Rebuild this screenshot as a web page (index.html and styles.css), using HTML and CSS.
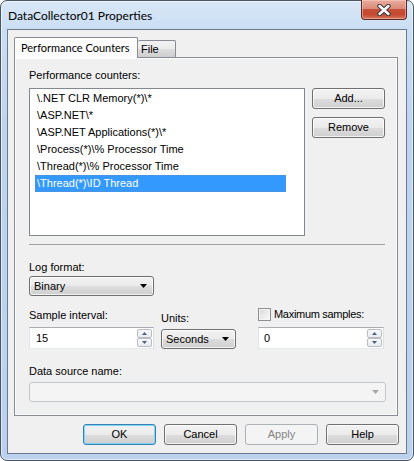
FILE: index.html
```html
<!DOCTYPE html>
<html>
<head>
<meta charset="utf-8">
<title>DataCollector01 Properties</title>
<link rel="stylesheet" href="styles.css">
</head>
<body>
<div class="window">
  <div class="titlebar">
    <span class="title">DataCollector01 Properties</span>
    <div class="close">
      <svg width="14" height="12" viewBox="0 0 14 12">
        <path d="M2.5 2 L11.5 10 M11.5 2 L2.5 10" stroke="#3a3a3a" stroke-width="4.4" stroke-linecap="round" fill="none"/>
        <path d="M2.5 2 L11.5 10 M11.5 2 L2.5 10" stroke="#ffffff" stroke-width="2.4" stroke-linecap="round" fill="none"/>
      </svg>
    </div>
  </div>
  <div class="client">
    <div class="tabs">
      <div class="tab active">Performance Counters</div>
      <div class="tab">File</div>
    </div>
    <div class="panel">
      <div class="label">Performance counters:</div>
      <div class="counters-row">
        <div class="listbox">
          <div class="item">\.NET CLR Memory(*)\*</div>
          <div class="item">\ASP.NET\*</div>
          <div class="item">\ASP.NET Applications(*)\*</div>
          <div class="item">\Process(*)\% Processor Time</div>
          <div class="item">\Thread(*)\% Processor Time</div>
          <div class="item selected">\Thread(*)\ID Thread</div>
        </div>
        <div class="side-buttons">
          <div class="btn">Add...</div>
          <div class="btn">Remove</div>
        </div>
      </div>
      <div class="separator"></div>
      <div class="label label-log">Log format:</div>
      <div class="combo combo-log">
        <span>Binary</span>
        <svg class="arrow" width="7" height="4" viewBox="0 0 7 4"><polygon points="0,0 7,0 3.5,4" fill="#000"/></svg>
      </div>
      <div class="sample-row">
        <div class="field field-interval">
          <div class="label">Sample interval:</div>
          <div class="spin">
            <span class="spin-value">15</span>
            <div class="spin-buttons">
              <div class="spin-btn"><svg width="5" height="3" viewBox="0 0 5 3"><polygon points="0,3 5,3 2.5,0" fill="#4c5e80"/></svg></div>
              <div class="spin-btn"><svg width="5" height="3" viewBox="0 0 5 3"><polygon points="0,0 5,0 2.5,3" fill="#4c5e80"/></svg></div>
            </div>
          </div>
        </div>
        <div class="field field-units">
          <div class="label label-units">Units:</div>
          <div class="combo combo-units">
            <span>Seconds</span>
            <svg class="arrow" width="7" height="4" viewBox="0 0 7 4"><polygon points="0,0 7,0 3.5,4" fill="#000"/></svg>
          </div>
        </div>
        <div class="field field-max">
          <div class="check-line">
            <span class="checkbox"></span>
            <span class="check-label">Maximum samples:</span>
          </div>
          <div class="spin">
            <span class="spin-value spin-value-max">0</span>
            <div class="spin-buttons">
              <div class="spin-btn"><svg width="5" height="3" viewBox="0 0 5 3"><polygon points="0,3 5,3 2.5,0" fill="#4c5e80"/></svg></div>
              <div class="spin-btn"><svg width="5" height="3" viewBox="0 0 5 3"><polygon points="0,0 5,0 2.5,3" fill="#4c5e80"/></svg></div>
            </div>
          </div>
        </div>
      </div>
      <div class="label label-source">Data source name:</div>
      <div class="combo combo-source disabled">
        <span></span>
        <svg class="arrow" width="7" height="4" viewBox="0 0 7 4"><polygon points="0,0 7,0 3.5,4" fill="#a6a6a6"/></svg>
      </div>
    </div>
    <div class="footer">
      <div class="btn default">OK</div>
      <div class="btn">Cancel</div>
      <div class="btn disabled">Apply</div>
      <div class="btn">Help</div>
    </div>
  </div>
</div>
</body>
</html>
```

FILE: styles.css
```css
html, body {
  margin: 0;
  padding: 0;
  background: #ffffff;
}

body {
  font-family: "Liberation Sans", Arial, sans-serif;
  font-size: 11px;
  color: #000;
}

.window {
  width: 414px;
  height: 461px;
  box-sizing: border-box;
  border: 1px solid #4b5562;
  border-radius: 7px;
  padding: 0 6px 6px;
  display: flex;
  flex-direction: column;
  background: linear-gradient(180deg, #d9e7f6 0px, #cadef3 28px, #bfd5ee 120px, #bad2ee 100%);
  box-shadow: inset 0 0 0 1px rgba(255, 255, 255, 0.55);
}

.titlebar {
  height: 28px;
  display: flex;
  justify-content: space-between;
  align-items: flex-start;
}

.title {
  font-family: Lato, "Liberation Sans", sans-serif;
  font-size: 12px;
  line-height: 15px;
  margin-top: 7px;
  padding-left: 1px;
  color: #000;
  white-space: nowrap;
}

.close {
  width: 46px;
  height: 20px;
  margin-top: -1px;
  box-sizing: border-box;
  border: 1px solid #5b2a22;
  border-top: none;
  border-radius: 0 0 4px 4px;
  background: linear-gradient(180deg, #e9ab9d 0%, #dc8a78 45%, #c6503a 50%, #c4482f 75%, #d5735c 100%);
  box-shadow: inset 0 0 0 1px rgba(255, 220, 210, 0.45);
  display: flex;
  align-items: center;
  justify-content: center;
}

.client {
  flex: 1;
  border: 1px solid #6c7a8b;
  background: #f0f0f0;
  padding: 7px 8px 0 6px;
  display: flex;
  flex-direction: column;
}

.tabs {
  display: flex;
  align-items: flex-end;
  height: 21px;
  margin-bottom: -1px;
}

.tab {
  box-sizing: border-box;
  border: 1px solid #898c95;
  border-bottom: none;
  border-radius: 2px 2px 0 0;
  white-space: nowrap;
}

.tab.active {
  position: relative;
  z-index: 1;
  width: 124px;
  height: 21px;
  padding-left: 6px;
  font-family: Lato, "Liberation Sans", sans-serif;
  font-size: 11px;
  line-height: 19px;
  background: linear-gradient(180deg, #ffffff 0%, #fbfbfb 100%);
  overflow: hidden;
}

.tab:not(.active) {
  width: 38px;
  height: 17px;
  margin-bottom: 1px;
  padding-left: 3px;
  line-height: 17px;
  border-left: none;
  background: linear-gradient(180deg, #f2f2f2 0%, #ebebeb 50%, #dddddd 50%, #cfcfcf 100%);
}

.panel {
  border: 1px solid #898c95;
  background: #f0f0f0;
  box-shadow: inset 0 0 0 1px #fbfbfb;
  padding: 11px 12px 13px 14px;
  display: flex;
  flex-direction: column;
}

.label {
  line-height: 13px;
  height: 13px;
  white-space: nowrap;
}

.counters-row {
  display: flex;
  margin-top: 6px;
}

.listbox {
  width: 276px;
  height: 148px;
  box-sizing: border-box;
  border: 1px solid #828790;
  background: #ffffff;
  padding: 1px 0 0 5px;
}

.item {
  width: 251px;
  height: 17px;
  line-height: 17px;
  padding-left: 2px;
  box-sizing: border-box;
  white-space: nowrap;
}

.item.selected {
  background: #3399ff;
  color: #ffffff;
  outline: 1px dotted #5d8fc9;
  outline-offset: -1px;
}

.side-buttons {
  margin-left: 7px;
  display: flex;
  flex-direction: column;
  gap: 8px;
}

.btn {
  width: 73px;
  height: 21px;
  box-sizing: border-box;
  border: 1px solid #707070;
  border-radius: 3px;
  background: linear-gradient(180deg, #f2f2f2 0%, #ebebeb 50%, #dddddd 50%, #cfcfcf 100%);
  box-shadow: inset 0 0 0 1px rgba(255, 255, 255, 0.75);
  display: flex;
  align-items: center;
  justify-content: center;
  line-height: 13px;
}

.btn.default {
  border-color: #3c7fb1;
  box-shadow: inset 0 0 0 1px #7ad7f7;
}

.btn.disabled {
  border-color: #adb2b5;
  background: #f4f4f4;
  box-shadow: none;
  color: #838383;
}

.separator {
  height: 1px;
  width: 356px;
  margin-top: 8px;
  background: #a0a0a0;
}

.label-log {
  margin-top: 16px;
}

.combo {
  height: 20px;
  box-sizing: border-box;
  border: 1px solid #707070;
  border-radius: 3px;
  background: linear-gradient(180deg, #f2f2f2 0%, #ebebeb 50%, #dddddd 50%, #cfcfcf 100%);
  box-shadow: inset 0 0 0 1px rgba(255, 255, 255, 0.75);
  display: flex;
  align-items: center;
  justify-content: space-between;
  padding: 0 6px 0 4px;
}

.combo-log {
  width: 125px;
  margin-top: 2px;
}

.combo-units {
  width: 75px;
}

.combo-source {
  width: 357px;
  margin-top: 4px;
}

.combo.disabled {
  border-color: #c2c5c9;
  background: #f4f4f4;
  box-shadow: none;
}

.sample-row {
  display: flex;
  align-items: flex-end;
  margin-top: 12px;
}

.field {
  display: flex;
  flex-direction: column;
}

.field-interval {
  width: 125px;
}

.field-interval .spin {
  margin-top: 5px;
}

.field-units {
  margin-left: 7px;
  width: 75px;
}

.label-units {
  margin-bottom: 4px;
}

.field-max {
  margin-left: 22px;
  width: 126px;
}

.check-line {
  display: flex;
  align-items: center;
  height: 13px;
  margin-bottom: 6px;
}

.checkbox {
  width: 13px;
  height: 13px;
  box-sizing: border-box;
  border: 1px solid #8e8f8f;
  background: linear-gradient(135deg, #d7d7d7 0%, #eeeeee 60%, #fafafa 100%);
  box-shadow: inset 0 0 0 1px #f4f4f4;
}

.check-label {
  margin-left: 3px;
  line-height: 13px;
  white-space: nowrap;
  letter-spacing: -0.3px;
}

.spin {
  height: 22px;
  box-sizing: border-box;
  border: 1px solid #abadb3;
  border-left-color: #e2e3ea;
  border-right-color: #dbdfe6;
  border-bottom-color: #e3e9ef;
  background: #ffffff;
  display: flex;
  align-items: center;
  justify-content: space-between;
  padding: 0 1px 0 6px;
}

.spin-value-max {
  margin-left: -1px;
}

.spin-buttons {
  display: flex;
  flex-direction: column;
  width: 15px;
  height: 18px;
}

.spin-btn {
  flex: 1;
  box-sizing: border-box;
  border: 1px solid #b9bdc3;
  border-radius: 2px;
  background: linear-gradient(180deg, #f8f8f8 0%, #e9ecf0 100%);
  display: flex;
  align-items: center;
  justify-content: center;
}

.label-source {
  margin-top: 16px;
}

.footer {
  display: flex;
  justify-content: flex-end;
  gap: 8px;
  margin-top: 8px;
  margin-right: -1px;
}
```
